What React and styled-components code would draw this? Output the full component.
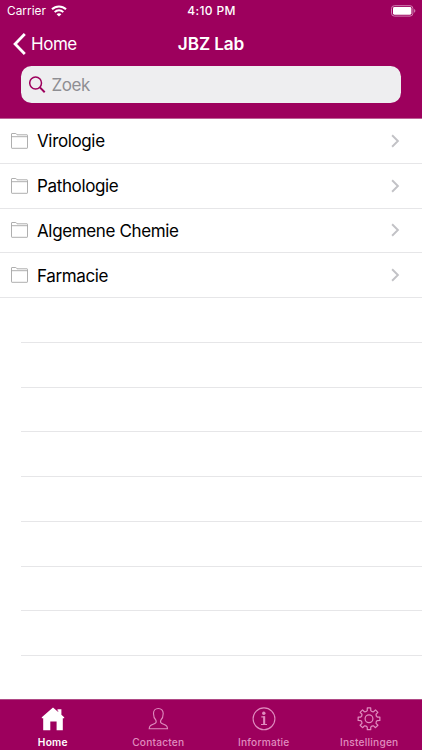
import React from 'react';
import styled, { createGlobalStyle } from 'styled-components';

const BRAND = '#9d005d';
const TAB_IDLE = '#e08cbf';

const GlobalStyle = createGlobalStyle`
  *, *::before, *::after { box-sizing: border-box; }
  body { margin: 0; background: #fff; font-family: Inter, "Liberation Sans", sans-serif; }
  svg { display: block; flex: none; }
`;

const Screen = styled.div`
  width: 422px;
  height: 750px;
  display: flex;
  flex-direction: column;
  overflow: hidden;
  background: #fff;
`;

const Header = styled.header`
  height: 119px;
  flex: none;
  background: ${BRAND};
  border-bottom: 1px solid #bd6297;
  color: #fff;
`;

const StatusBar = styled.div`
  display: grid;
  grid-template-columns: 1fr auto 1fr;
  align-items: center;
  height: 22px;
  padding: 0 6px 0 7px;
  line-height: 22px;
`;

const Carrier = styled.div`
  display: flex;
  align-items: center;
  gap: 5px;
  font-size: 11.8px;
  letter-spacing: 0.05px;
`;

const Clock = styled.time`
  font-size: 12px;
  font-weight: 500;
  letter-spacing: 0.38px;
`;

const BatterySlot = styled.div`
  justify-self: end;
  margin-top: -1px;
`;

const NavBar = styled.nav`
  display: grid;
  grid-template-columns: 1fr auto 1fr;
  align-items: center;
  height: 44px;
  padding: 0 12px 1px;
`;

const BackLink = styled.div`
  display: flex;
  align-items: center;
  gap: 5px;
  font-size: 17px;
  line-height: 24px;
  letter-spacing: -0.45px;
`;

const Title = styled.h1`
  margin: 0;
  font-size: 17.2px;
  font-weight: 600;
  line-height: 24px;
  letter-spacing: -0.12px;
`;

const SearchField = styled.div`
  display: flex;
  align-items: center;
  gap: 6px;
  height: 37px;
  margin: 0 21px 0 20.5px;
  padding: 0 8px 0;
  border-radius: 10.5px;
  background: #eeeef0;
  color: #8e8e93;
  font-size: 17px;
  letter-spacing: -0.45px;
`;

const List = styled.ul`
  flex: 1;
  min-height: 0;
  margin: 0;
  padding: 0;
  list-style: none;
  overflow: hidden;
`;

const Row = styled.li`
  display: flex;
  align-items: center;
  height: 44.75px;
  margin-left: ${(p) => (p.$inset ? '20.5px' : '0')};
  padding: 0 22px 0 11px;
  border-bottom: 1px solid #e6e6e8;
`;

const RowLabel = styled.span`
  flex: 1;
  padding: 1px 0 0 9px;
  color: #000;
  font-size: 17px;
  line-height: 24px;
  letter-spacing: -0.36px;
`;

const TabBar = styled.footer`
  display: grid;
  grid-template-columns: repeat(4, 1fr);
  height: 51px;
  flex: none;
  background: ${BRAND};
  border-top: 1px solid #b04a86;
`;

const Tab = styled.div`
  display: flex;
  flex-direction: column;
  align-items: center;
  padding-top: 7px;
  color: ${(p) => (p.$active ? '#fff' : TAB_IDLE)};
`;

const TabLabel = styled.span`
  margin-top: 4px;
  font-size: 10.2px;
  font-weight: ${(p) => (p.$active ? 600 : 500)};
  line-height: 13px;
  letter-spacing: 0.2px;
`;

const WifiIcon = () => (
  <svg width="16" height="12" viewBox="0 0 16 12" fill="none" stroke="#fff" strokeWidth="2">
    <path d="M1 4.3C4.9.4 11.1.4 15 4.3" />
    <path d="M3.7 7.1c2.4-2.4 6.2-2.4 8.6 0" />
    <path d="M8 11.6 5.6 9.2c1.3-1.2 3.5-1.2 4.8 0Z" fill="#fff" stroke="none" />
  </svg>
);

const BatteryIcon = () => (
  <svg width="25" height="12" viewBox="0 0 25 12">
    <rect x=".5" y=".7" width="21.4" height="10.4" rx="2.9" fill="none" stroke="#d080b2" />
    <rect x="2" y="2.1" width="18.4" height="7.6" rx="1.4" fill="#fff" />
    <path d="M23.2 4.1c1.5.5 1.5 3.1 0 3.6Z" fill="#d792bd" />
  </svg>
);

const BackIcon = () => (
  <svg width="14" height="22" viewBox="0 0 14 22" fill="none" stroke="#fff" strokeWidth="2.8">
    <path d="M12.8 1.1 3.1 11l9.7 9.9" />
  </svg>
);

const SearchIcon = () => (
  <svg width="17" height="18" viewBox="0 0 17 18" fill="none" stroke={BRAND}>
    <circle cx="6.6" cy="7" r="5.9" strokeWidth="1.5" />
    <path d="m10.9 11.4 4.8 4.8" strokeWidth="2" />
  </svg>
);

const FolderIcon = () => (
  <svg width="17" height="16" viewBox="0 0 17 16" fill="none" stroke="#a6a6a6" strokeWidth=".9">
    <path d="M.5 14.8V.9Q.5.5 1 .5h3.700q.5 0 .8.5l.5.8h10q.5 0 .5.5v12.500q0 .5-.5.5H1q-.5 0-.5-.5Z" />
    <path d="M.5 3.700h16" />
  </svg>
);

const ChevronIcon = () => (
  <svg width="9" height="14" viewBox="0 0 9 14" fill="none" stroke="#c2c2c6" strokeWidth="1.9">
    <path d="m1.100 1.300 5.800 5.700-5.800 5.700" />
  </svg>
);

const HomeIcon = () => (
  <svg width="24" height="25" viewBox="0 0 24 25" fill="currentColor">
    <path d="M12 .6 17.200 5V3.800h-.7V2.300h3.900v5.500l2.800 2.500v1h-1.400v11.900h-6.200v-8.800H9.300v8.800H2.200V11.300H.8v-1Z" />
  </svg>
);

const PersonIcon = () => (
  <svg width="24" height="25" viewBox="0 0 24 25" fill="none" stroke="currentColor" strokeWidth="1.1">
    <path d="M12.3 1.500c-3 0-4.800 2-4.800 5 0 2.900.8 5.100 2.300 6.500.6 1.400.4 2.800-.6 3.300-2.100 1.100-4.400 1.300-5.300 2.900-.4.800-.6 1.600-.7 2.600h18.300c-.1-1-.3-1.800-.7-2.600-.9-1.600-3.200-1.800-5.300-2.900-1-.5-1.200-1.900-.6-3.300 1.500-1.400 2.300-3.600 2.300-6.500 0-3-1.900-5-4.900-5Z" />
  </svg>
);

const InfoIcon = () => (
  <svg width="24" height="25" viewBox="0 0 24 25" fill="none" stroke="currentColor">
    <circle cx="12" cy="11.8" r="10.9" strokeWidth="1.1" />
    <circle cx="11.8" cy="6.3" r="1.7" fill="currentColor" stroke="none" />
    <path d="M9.300 9.900h2.900v7.500M9 17.500h6" strokeWidth="1.2" />
    <path d="M12.200 9.300v8.200" strokeWidth="2" />
  </svg>
);

// Walks around the cog, alternating between a tooth tip and a rounded valley.
const gearPath = (cx, cy, tip, root, teeth) => {
  const at = (r, deg) => {
    const a = (deg * Math.PI) / 180;
    return `${(cx + r * Math.sin(a)).toFixed(2)} ${(cy - r * Math.cos(a)).toFixed(2)}`;
  };
  const step = 360 / teeth;
  let d = '';
  for (let i = 0; i < teeth; i += 1) {
    const a = i * step;
    d += `${i ? 'L' : 'M'}${at(root, a - 12)}L${at(tip, a - 9)}L${at(tip, a + 9)}L${at(root, a + 12)}`;
    d += `Q${at(root - 1, a + step / 2)} ${at(root, a + step - 12)}`;
  }
  return `${d}Z`;
};

const GearIcon = () => (
  <svg width="24" height="25" viewBox="0 0 24 25" fill="none" stroke="currentColor" strokeWidth="1.2" strokeLinejoin="round">
    <path d={gearPath(12, 11.8, 11, 8.4, 8)} />
    <circle cx="12" cy="11.8" r="3.9" />
  </svg>
);

const folders = [
  { name: 'Virologie' },
  { name: 'Pathologie' },
  { name: 'Algemene Chemie' },
  { name: 'Farmacie' },
];

const tabs = [
  { name: 'Home', Icon: HomeIcon, active: true },
  { name: 'Contacten', Icon: PersonIcon },
  { name: 'Informatie', Icon: InfoIcon },
  { name: 'Instellingen', Icon: GearIcon },
];

export default function App() {
  return (
    <>
      <GlobalStyle />
      <Screen>
        <Header>
          <StatusBar>
            <Carrier>Carrier <WifiIcon /></Carrier>
            <Clock>4:10 PM</Clock>
            <BatterySlot><BatteryIcon /></BatterySlot>
          </StatusBar>
          <NavBar>
            <BackLink><BackIcon />Home</BackLink>
            <Title>JBZ Lab</Title>
          </NavBar>
          <SearchField><SearchIcon />Zoek</SearchField>
        </Header>
        <List>
          {folders.map(({ name }) => (
            <Row key={name}>
              <FolderIcon />
              <RowLabel>{name}</RowLabel>
              <ChevronIcon />
            </Row>
          ))}
          {Array.from({ length: 8 }, (_, i) => <Row key={i} $inset />)}
        </List>
        <TabBar>
          {tabs.map(({ name, Icon, active }) => (
            <Tab key={name} $active={active}>
              <Icon />
              <TabLabel $active={active}>{name}</TabLabel>
            </Tab>
          ))}
        </TabBar>
      </Screen>
    </>
  );
}
